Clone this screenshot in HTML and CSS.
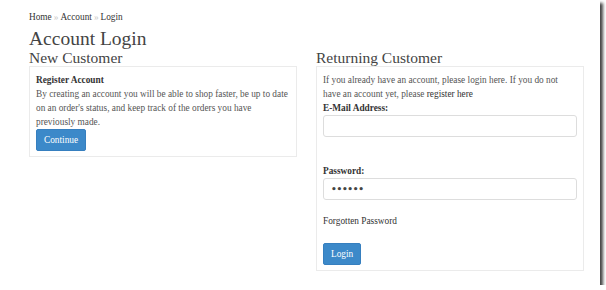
FILE: index.html
```html
<!DOCTYPE html>
<html lang="en">
<head>
  <meta charset="UTF-8" />
  <title>Account Login</title>
  <link rel="stylesheet" href="styles.css">
</head>
<body>
  <div class="frame">
    <div class="container">
      <ul class="breadcrumb">
        <li><a href="#">Home</a></li>
        <li><a href="#">Account</a></li>
        <li><a href="#">Login</a></li>
      </ul>

      <h1>Account Login</h1>

      <div class="row">
        <div class="col">
          <h2>New Customer</h2>
          <div class="well">
            <p class="well-title">Register Account</p>
            <p>By creating an account you will be able to shop faster, be up to date on an order's status, and keep track of the orders you have previously made.</p>
            <a href="#" class="btn">Continue</a>
          </div>
        </div>

        <div class="col">
          <h2>Returning Customer</h2>
          <div class="well">
            <p>If you already have an account, please login here. If you do not have an account yet, please <a href="#">register here</a></p>
            <div class="form-group">
              <label for="email">E-Mail Address:</label>
              <input type="text" id="email" />
            </div>
            <div class="form-group">
              <label for="password">Password:</label>
              <input type="password" id="password" class="pass" value="secret" />
            </div>
            <a href="#" class="forgot">Forgotten Password</a>
            <button class="btn login-btn">Login</button>
          </div>
        </div>
      </div>
    </div>
  </div>
</body>
</html>
```

FILE: styles.css
```css
body {
  margin: 0;
  background: #fff;
  font-family: "Liberation Serif", serif;
  font-size: 9.3px;
  line-height: 14px;
  color: #555;
}

.frame {
  width: 600px;
  height: 285px;
  background: #fff;
  box-shadow: 3px 3px 3px #444;
  overflow: hidden;
}

.container {
  width: 555px;
  padding-left: 29px;
}

a {
  color: #333;
  text-decoration: none;
}

.breadcrumb {
  list-style: none;
  margin: 0;
  padding: 10px 0 0;
  display: flex;
}

.breadcrumb li + li::before {
  content: "»";
  color: #ccc;
  padding: 0 2px;
}

h1 {
  margin: 4px 0 0;
  font-size: 19.5px;
  line-height: 21px;
  font-weight: normal;
  color: #444;
}

h2 {
  margin: 0;
  font-size: 15.5px;
  line-height: 17px;
  font-weight: normal;
  color: #444;
}

.row {
  display: grid;
  grid-template-columns: 268px 268px;
  column-gap: 19px;
  align-items: start;
}

.well {
  border: 1px solid #ebebeb;
  padding: 6px 6px 5px;
}

.well p {
  margin: 0;
}

.well-title {
  font-weight: bold;
  color: #333;
}

.btn {
  display: inline-block;
  background: #3c89c9;
  color: #fff;
  border: 1px solid #367fbf;
  border-radius: 2px;
  font-family: "Liberation Serif", serif;
  font-size: 9.3px;
  line-height: 14px;
  padding: 3px 7px;
  cursor: pointer;
}

.form-group {
  margin-bottom: 27px;
}

.form-group + .form-group {
  margin-bottom: 0;
}

label {
  display: block;
  font-weight: bold;
  color: #333;
}

input {
  display: block;
  box-sizing: border-box;
  width: 100%;
  height: 22px;
  margin: 0;
  border: 1px solid #ddd;
  border-radius: 3px;
  padding: 0 7px;
  font-family: "Liberation Serif", serif;
  font-size: 9.3px;
  color: #555;
}

.pass {
  font-family: "DejaVu Sans", sans-serif;
  font-size: 9px;
  font-weight: bold;
  letter-spacing: -0.3px;
  color: #444;
}

.forgot {
  display: block;
  margin-top: 14px;
}

.login-btn {
  margin-top: 15px;
}
```
